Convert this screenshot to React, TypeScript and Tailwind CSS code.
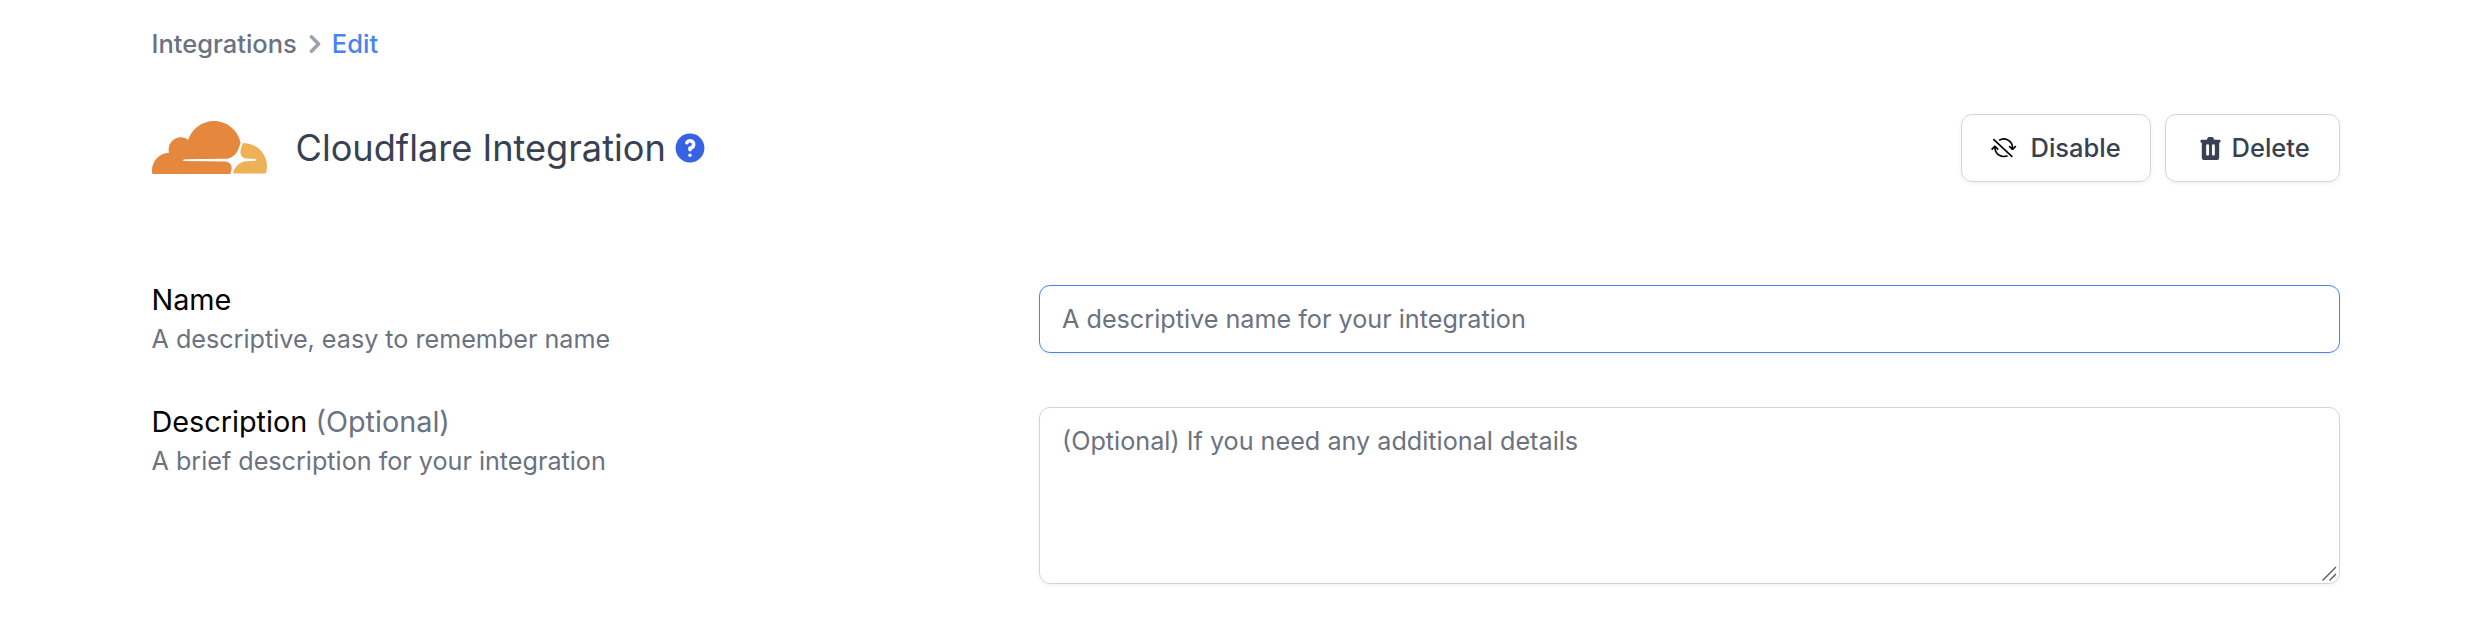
import type { ReactNode } from "react";
import { HiChevronRight, HiQuestionMarkCircle, HiTrash } from "react-icons/hi";
import { VscSyncIgnored } from "react-icons/vsc";

function CloudflareLogo() {
  return (
    <svg viewBox="0 0 256 116" className="-mt-px h-[53px] w-[115px] shrink-0" preserveAspectRatio="none" aria-hidden="true">
      <path
        fill="#fff"
        d="m202.357 49.394-5.311-2.124C172.085 103.434 72.786 69.289 66.81 85.997c-.996 11.286 54.227 2.146 93.706 4.059 12.039.583 18.076 9.671 12.964 24.484l10.069.031c11.615-36.209 48.683-17.73 50.232-29.68-2.545-7.857-42.601 0-31.425-35.497Z"
      />
      <path
        fill="#e5873d"
        d="M176.332 108.348c1.593-5.31 1.062-10.622-1.593-13.809-2.656-3.187-6.374-5.31-11.154-5.842L71.17 87.634c-.531 0-1.062-.53-1.593-.53-.531-.532-.531-1.063 0-1.594.531-1.062 1.062-1.594 2.124-1.594l92.946-1.062c11.154-.53 22.839-9.56 27.087-20.182l5.312-13.809c0-.532.531-1.063 0-1.594C191.203 20.182 166.772 0 138.091 0 111.535 0 88.697 16.995 80.73 40.896c-5.311-3.718-11.684-5.843-19.12-5.31-12.747 1.061-22.838 11.683-24.432 24.43-.531 3.187 0 6.374.532 9.56C16.996 70.107 0 87.103 0 108.348c0 2.124 0 3.718.531 5.842 0 1.063 1.062 1.594 1.594 1.594h170.489c1.062 0 2.125-.53 2.125-1.594l1.593-5.842Z"
      />
      <path
        fill="#efb157"
        d="M205.544 48.863h-2.656c-.531 0-1.062.53-1.593 1.062l-3.718 12.747c-1.593 5.31-1.062 10.623 1.594 13.809 2.655 3.187 6.373 5.31 11.153 5.843l19.652 1.062c.53 0 1.062.53 1.593.53.53.532.53 1.063 0 1.594-.531 1.063-1.062 1.594-2.125 1.594l-20.182 1.062c-11.154.53-22.838 9.56-27.087 20.182l-1.063 4.78c-.531.532 0 1.594 1.063 1.594h70.108c1.062 0 1.593-.531 1.593-1.593 1.062-4.25 2.124-9.03 2.124-13.81 0-27.618-22.838-50.456-50.456-50.456"
      />
    </svg>
  );
}

function Field({ label, optional, hint, children }: { label: string; optional?: boolean; hint: string; children: ReactNode }) {
  return (
    <div className="flex items-start">
      <div className="w-[887.5px] shrink-0">
        <label className="block text-[28.8px] leading-[42px] text-black">
          {label}
          {optional && <span className="text-[#6b7280]"> (Optional)</span>}
        </label>
        <p className="text-[25.15px] leading-[36px] text-[#6b7280]">{hint}</p>
      </div>
      <div className="relative mt-[6px] flex-1">{children}</div>
    </div>
  );
}

export default function App() {
  return (
    <main className="min-h-[620px] bg-white pr-[152px] pl-[151.5px] pt-[26px] font-['Inter',sans-serif]">
      <nav className="flex h-9 items-center text-[25.5px] leading-9 font-medium">
        <a className="text-[#6b7280]">Integrations</a>
        <HiChevronRight className="-mr-px size-9 text-[#9ca3af]" />
        <a className="text-[#4b82f1]">Edit</a>
      </nav>

      <header className="mt-[52px] flex h-[68px] items-center pl-[0.5px]">
        <CloudflareLogo />
        <h1 className="ml-[28.5px] text-[36.15px] leading-[50px] text-[#374151]">Cloudflare Integration</h1>
        <HiQuestionMarkCircle className="ml-1.5 size-9 text-[#3662e3]" />
        <div className="ml-auto flex gap-3.5 text-[25.5px] font-medium text-[#374151]">
          <button className="flex h-[68px] w-[190px] items-center rounded-[11px] border border-[#d1d5db] pl-[29px] shadow-[0_2px_4px_rgba(0,0,0,0.05)]">
            <VscSyncIgnored className="mr-3.5 size-[25.5px] text-black" />
            Disable
          </button>
          <button className="flex h-[68px] w-[175px] items-center rounded-[11px] border border-[#d1d5db] pl-[30px] shadow-[0_2px_4px_rgba(0,0,0,0.05)]">
            <HiTrash className="mr-[6.5px] size-[29px]" />
            Delete
          </button>
        </div>
      </header>

      <form className="mt-[97px] flex flex-col gap-[44px]">
        <div className="h-[78px]">
          <Field label="Name" hint="A descriptive, easy to remember name">
            <input
              placeholder="A descriptive name for your integration"
              className="block h-[68px] w-full rounded-[11px] border border-[#4b82f1] px-[22px] text-[25.2px] leading-9 shadow-[0_2px_4px_rgba(0,0,0,0.05)] outline-none placeholder:text-[#6b7280]"
            />
          </Field>
        </div>
        <Field label="Description" optional hint="A brief description for your integration">
          <textarea
            placeholder="(Optional) If you need any additional details"
            className="block h-[177px] w-full resize-none rounded-[11px] border border-[#d1d5db] px-[22px] py-[15px] text-[25.2px] leading-9 shadow-[0_2px_4px_rgba(0,0,0,0.05)] outline-none placeholder:text-[#6b7280]"
          />
          <svg viewBox="0 0 16 16" className="absolute right-[3px] bottom-[2px] size-4" stroke="#555" strokeWidth="1.3" aria-hidden="true">
            <path d="M1.5 14.5 15 1M8.5 14.5 15 8" />
          </svg>
        </Field>
      </form>
    </main>
  );
}
